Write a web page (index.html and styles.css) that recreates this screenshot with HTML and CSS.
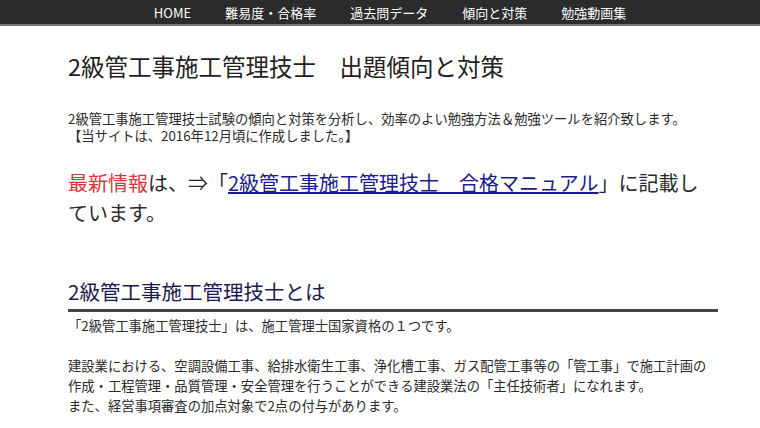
FILE: index.html
```html
<!DOCTYPE html>
<html lang="ja">
<head>
    <meta charset="UTF-8">
    <title>2級管工事施工管理技士　出題傾向と対策</title>
    <meta name="viewport" content="width=device-width, initial-scale=1">
    <link rel="stylesheet" href="styles.css">
</head>
<body>
    <nav class="menu">
        <a href="#">HOME</a>
        <a href="#">難易度・合格率</a>
        <a href="#">過去問データ</a>
        <a href="#">傾向と対策</a>
        <a href="#">勉強動画集</a>
    </nav>

    <main class="content">
        <h1 class="page-title">2級管工事施工管理技士　出題傾向と対策</h1>

        <p class="lead">
            2級管工事施工管理技士試験の傾向と対策を分析し、効率のよい勉強方法＆勉強ツールを紹介致します。<br>
            【当サイトは、2016年12月頃に作成しました。】
        </p>

        <p class="news">
            <span class="red">最新情報</span>は、⇒「<a href="#">2級管工事施工管理技士　合格マニュアル</a>」に記載しています。
        </p>

        <h2 class="section-title">2級管工事施工管理技士とは</h2>

        <p class="text">「2級管工事施工管理技士」は、施工管理士国家資格の１つです。</p>

        <p class="text">
            建設業における、空調設備工事、給排水衛生工事、浄化槽工事、ガス配管工事等の「管工事」で施工計画の<br>
            作成・工程管理・品質管理・安全管理を行うことができる建設業法の「主任技術者」になれます。<br>
            また、経営事項審査の加点対象で2点の付与があります。
        </p>
    </main>
</body>
</html>
```

FILE: styles.css
```css
body {
    margin: 0;
    padding: 0;
    background: #fff;
    color: #2a2a2a;
    font-family: "Noto Sans CJK JP", "Noto Sans", sans-serif;
}

.menu {
    display: flex;
    justify-content: center;
    gap: 34px;
    background-color: #2b2b2b;
    border-bottom: 2px solid #777;
    height: 24px;
    align-items: center;
    padding-left: 20px;
}

.menu a {
    color: #fff;
    text-decoration: none;
    font-size: 13px;
}

.content {
    width: 650px;
    margin: 0 0 0 68px;
    padding-top: 25px;
}

.page-title {
    font-size: 23.5px;
    font-weight: normal;
    color: #222;
    margin: 0 0 29px;
    line-height: 30px;
}

.lead {
    font-size: 13.3px;
    line-height: 17px;
    margin: 0 0 24px;
}

.news {
    max-width: 640px;
    font-size: 20px;
    line-height: 30px;
    margin: 0 0 49px;
}

.news .red {
    color: #d4363a;
}

.news a {
    color: #1c1c8c;
}

.section-title {
    font-size: 20.5px;
    font-weight: normal;
    color: #1a1a4e;
    margin: 0 0 4px;
    padding-bottom: 4px;
    border-bottom: 3px solid #444;
    line-height: 28px;
}

.text {
    font-size: 13.3px;
    line-height: 20px;
    margin: 0 0 20px;
}
```
